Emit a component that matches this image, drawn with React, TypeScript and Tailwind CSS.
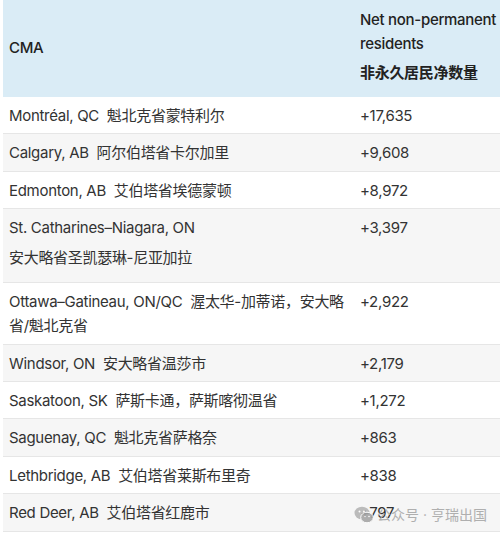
const rows: { name: string[]; value: string; tall?: boolean }[] = [
  { name: ["Montréal, QC  魁北克省蒙特利尔"], value: "+17,635" },
  { name: ["Calgary, AB  阿尔伯塔省卡尔加里"], value: "+9,608" },
  { name: ["Edmonton, AB  艾伯塔省埃德蒙顿"], value: "+8,972" },
  { name: ["St. Catharines–Niagara, ON", "安大略省圣凯瑟琳-尼亚加拉"], value: "+3,397", tall: true },
  { name: ["Ottawa–Gatineau, ON/QC  渥太华-加蒂诺，安大略省/魁北克省"], value: "+2,922" },
  { name: ["Windsor, ON  安大略省温莎市"], value: "+2,179" },
  { name: ["Saskatoon, SK  萨斯卡通，萨斯喀彻温省"], value: "+1,272" },
  { name: ["Saguenay, QC  魁北克省萨格奈"], value: "+863" },
  { name: ["Lethbridge, AB  艾伯塔省莱斯布里奇"], value: "+838" },
  { name: ["Red Deer, AB  艾伯塔省红鹿市"], value: "+797" },
];

function WeChatMark() {
  return (
    <svg width="20" height="18" viewBox="0 0 20 18">
      <ellipse cx="8" cy="7" rx="7.5" ry="6.3" fill="#b5b5b5" />
      <ellipse cx="13" cy="11.5" rx="6.3" ry="5.3" fill="#a6a6a6" stroke="#fff" strokeWidth="1" />
      <circle cx="5.5" cy="5.5" r="1" fill="#fff" />
      <circle cx="10" cy="5.5" r="1" fill="#fff" />
      <circle cx="11" cy="10.5" r="0.8" fill="#fff" />
      <circle cx="15" cy="10.5" r="0.8" fill="#fff" />
    </svg>
  );
}

export default function App() {
  return (
    <div
      className="w-[500px] h-[538px] bg-white relative overflow-hidden text-[15px] text-[#333] tracking-[-0.02em]"
      style={{ fontFamily: 'Inter, "Noto Sans CJK SC", sans-serif' }}
    >
      <div className="ml-[3px] w-[497px]">
        <div className="grid grid-cols-[349px_1fr] bg-[#daecf6] text-[#222] font-medium">
          <div className="flex items-center pl-[6px]">CMA</div>
          <div className="pl-[8px] pt-[8px] pb-[12px] leading-[24px]">
            <p>Net non-permanent</p>
            <p>residents</p>
            <p className="mt-[5px] font-bold">非永久居民净数量</p>
          </div>
        </div>
        {rows.map((r, i) => (
          <div
            key={r.value}
            className={`grid grid-cols-[349px_1fr] border-b border-[#e6e6e6] leading-[24px] pt-[7px] ${
              r.tall ? "pb-[12px]" : "pb-[5.4px]"
            } ${i % 2 === 1 ? "bg-[#f6f6f6]" : "bg-white"}`}
          >
            <div className="pl-[6px] pr-[4px]">
              {r.name.map((n, j) => (
                <p key={n} className={`whitespace-pre-wrap ${j > 0 ? "mt-[6px]" : ""}`}>
                  {n}
                </p>
              ))}
            </div>
            <div className="pl-[8px]">{r.value}</div>
          </div>
        ))}
      </div>
      <div className="absolute left-[354px] top-[504px] flex items-center gap-[3px] text-[14px] text-[#a8a8a8] opacity-90 tracking-normal">
        <WeChatMark />
        <span>公众号 · 亨瑞出国</span>
      </div>
    </div>
  );
}
